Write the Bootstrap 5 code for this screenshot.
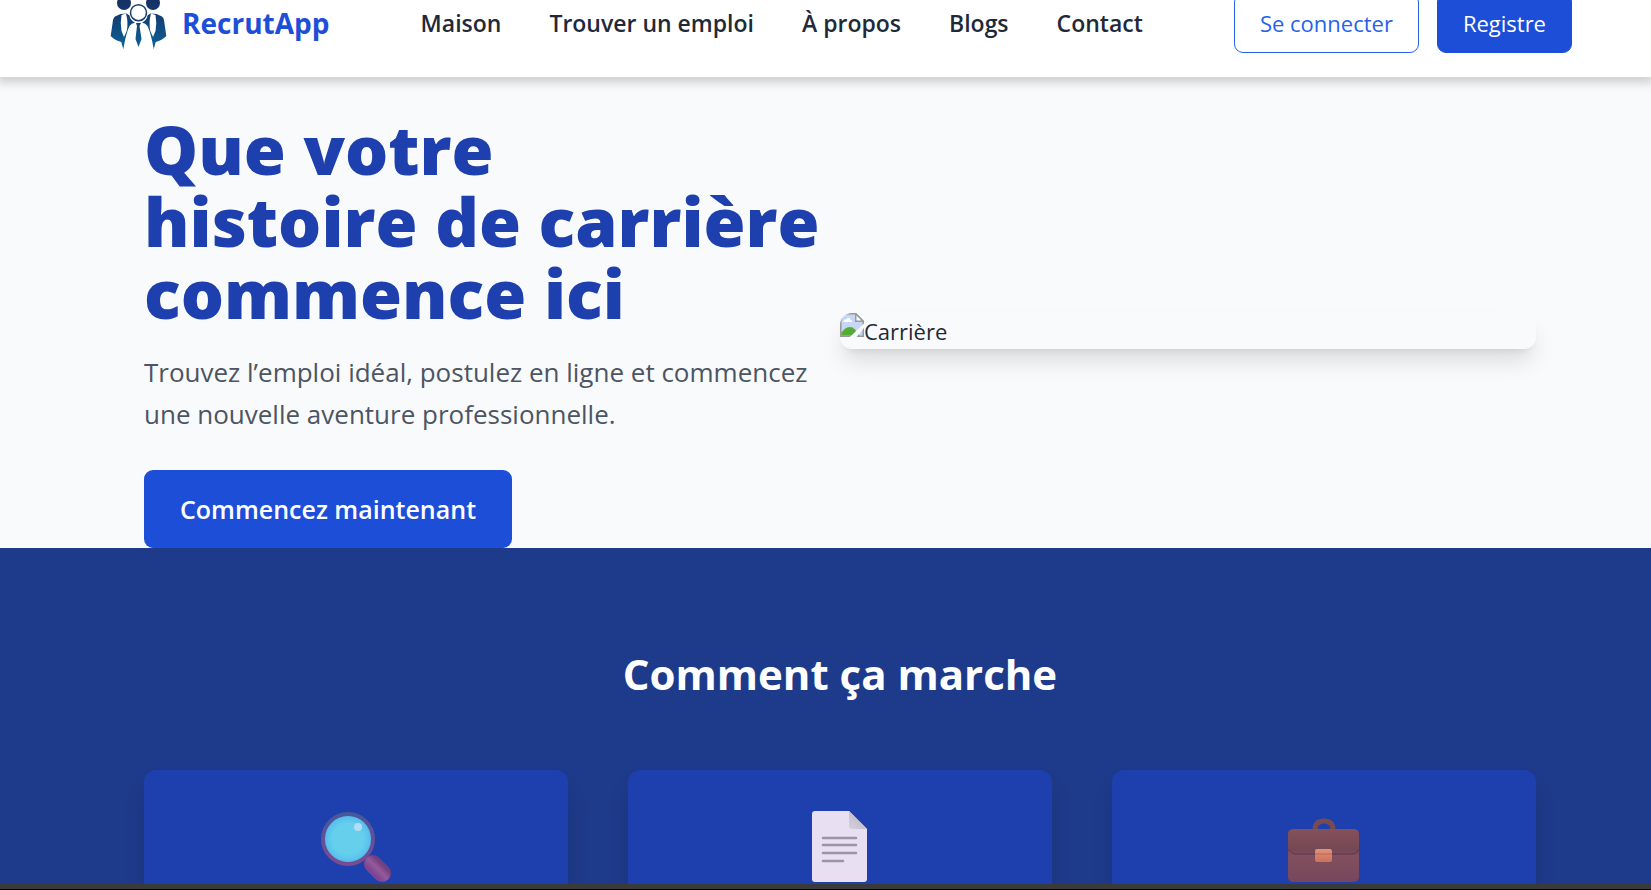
<!DOCTYPE html>
<html lang="fr">
<head>
<meta charset="utf-8">
<meta name="viewport" content="width=device-width, initial-scale=1">
<title>RecrutApp</title>
<link href="https://cdn.jsdelivr.net/npm/bootstrap@5.3.0/dist/css/bootstrap.min.css" rel="stylesheet">
<style>
body{font-family:"Open Sans","Noto Sans",sans-serif;font-size:22px;line-height:36px;color:#1f2937;background:#f9fafc;height:100vh;overflow:hidden}
.site-header{margin-top:-31px;padding:24px 79px 24px 108px;box-shadow:0 3px 9px 3px rgba(0,0,0,.17);position:relative;z-index:2}
.brand-link{color:#1d4ed8;font-size:28px;font-weight:700;gap:14px}
.main-links{gap:48px}
.main-links .nav-link{color:#1f2937;font-size:23px;font-weight:600;padding:0}
.btn-app{font-size:22px;line-height:36px;padding:11px 25px;border-radius:9px;border:1px solid #1d4ed8}
.btn-login{color:#2563eb;border-color:#2563eb;background:#fff}
.btn-solid,.btn-solid:hover{background:#1d4ed8;color:#fff}
.page-pad{padding-left:144px;padding-right:115px}
.hero{padding-top:36px}
.hero h1{font-size:68px;line-height:72px;font-weight:800;color:#1e40af;margin-bottom:22px}
.hero p{font-size:26px;line-height:42px;color:#4b5563;margin-bottom:35px}
.btn-start{font-size:25px;line-height:42px;font-weight:600;padding:18px 36px;border:0;border-radius:9px}
.hero-picture{border-radius:12px;box-shadow:0 15px 23px -4px rgba(0,0,0,.13),0 6px 9px -6px rgba(0,0,0,.12);height:36px;overflow:hidden}
.steps{background:#1e3a8a;padding-top:96px}
.steps h2{font-size:42px;line-height:60px;font-weight:700;margin-bottom:66px}
.steps .row{--bs-gutter-x:60px}
.step-card{background:#1e40af;border-radius:12px;padding-top:36px;height:280px;box-shadow:0 15px 23px -4px rgba(0,0,0,.15)}
.edge-strip{height:6px;background:#3a3a3a;border-bottom:1px solid #000}
</style>
</head>
<body>
<header class="site-header bg-white d-flex align-items-center justify-content-between">
  <a href="#" class="brand-link d-flex align-items-center text-decoration-none">
    <svg width="60" height="60" viewBox="0 0 60 60" aria-hidden="true">
      <defs><linearGradient id="suit" x1="0" y1="0" x2="0" y2="60" gradientUnits="userSpaceOnUse"><stop offset="0" stop-color="#142d63"/><stop offset=".25" stop-color="#143568"/><stop offset="1" stop-color="#0b679f"/></linearGradient>
      <g id="colleague"><circle cx="16" cy="10" r="7"/><path d="M12.500 21 7 23.500Q5.500 24.500 5 27L2.700 43Q7 47.500 13.300 49L15.300 56.300Q18 40 21.500 33 23.500 30 27 29.500 22 27 21.500 22.500L18.700 20.500Z"/><path d="M13.500 22 18 20.500Q20.500 29 18.700 38L16 44 13.500 38Q12 30 13.500 22Z" fill="#fff"/></g></defs>
      <g fill="url(#suit)">
        <use href="#colleague"/><use href="#colleague" transform="translate(61 0) scale(-1 1)"/>
        <path d="M28 30h5l-1.500 3 2 13-3 8-3-8 1.500-13Z"/>
      </g>
      <circle cx="30.500" cy="19.700" r="8" fill="#fff" stroke="#143e72" stroke-width="1.500"/>
    </svg>
    <span>RecrutApp</span>
  </a>
  <nav class="nav main-links">
    <a class="nav-link" href="#">Maison</a>
    <a class="nav-link" href="#">Trouver un emploi</a>
    <a class="nav-link" href="#">À propos</a>
    <a class="nav-link" href="#">Blogs</a>
    <a class="nav-link" href="#">Contact</a>
  </nav>
  <div class="d-flex" style="gap:18px">
    <button type="button" class="btn btn-app btn-login">Se connecter</button>
    <button type="button" class="btn btn-app btn-solid">Registre</button>
  </div>
</header>
<main>
  <section class="hero page-pad">
    <div class="row g-0 align-items-center">
      <div class="col-6">
        <h1>Que votre<br>histoire de carrière<br>commence ici</h1>
        <p class="text-nowrap">Trouvez l’emploi idéal, postulez en ligne et commencez<br>une nouvelle aventure professionnelle.</p>
        <button type="button" class="btn btn-solid btn-start d-block">Commencez maintenant</button>
      </div>
      <div class="col-6">
        <div class="hero-picture d-flex">
          <svg width="24" height="24" viewBox="0 0 16 16" aria-hidden="true">
            <path d="M.5.5h10l5 5v10H.5Z" fill="#c6d7f6" stroke="#999"/>
            <path d="M2 6q1-2 2.500-2Q6 2 7 4.500 8.500 5 8 6Z" fill="#fff"/>
            <path d="M1 15v-2q5-6 9-2l3 4Z" fill="#55ac35"/>
            <path d="M6.500 16 16 7v3l-5 6Z" fill="#f9fafc"/>
            <path d="M10.500.5v5h5Z" fill="#fff" stroke="#999"/>
          </svg>
          <span>Carrière</span>
        </div>
      </div>
    </div>
  </section>
  <section class="steps page-pad">
    <h2 class="text-center text-white">Comment ça marche</h2>
    <div class="row">
      <div class="col-4"><div class="step-card text-center">
        <svg width="80" height="80" viewBox="1 0 80 80" role="img" aria-label="Loupe">
          <defs><linearGradient id="rim" x1="0" y1="0" x2="0" y2="1"><stop offset="0" stop-color="#47589a"/><stop offset="1" stop-color="#7c4a90"/></linearGradient><radialGradient id="lens"><stop offset=".6" stop-color="#66d0ec"/><stop offset="1" stop-color="#50b9f0"/></radialGradient><linearGradient id="grip" x1="0" y1="1" x2="1" y2="0"><stop offset="0" stop-color="#7d4590"/><stop offset=".5" stop-color="#965a9b"/><stop offset="1" stop-color="#704080"/></linearGradient></defs>
          <path d="M58 58 67 67" stroke="url(#grip)" stroke-width="18" stroke-linecap="round"/>
          <circle cx="33" cy="33" r="25" fill="url(#lens)" stroke="url(#rim)" stroke-width="4"/>
          <circle cx="43" cy="21" r="4" fill="#b5dcf5"/>
        </svg></div></div>
      <div class="col-4"><div class="step-card text-center">
        <svg width="80" height="80" viewBox="0 0 80 80" role="img" aria-label="Document">
          <defs><linearGradient id="fold" x1="0" y1="1" x2="1" y2="0"><stop offset="0" stop-color="#d6d0dc"/><stop offset="1" stop-color="#b8b3c0"/></linearGradient></defs>
          <path d="M15 5h34l18 18v50q0 3-3 3H15q-3 0-3-3V8q0-3 3-3Z" fill="#e8dff2"/>
          <path d="M49 5 67 23H52q-3 0-3-3Z" fill="url(#fold)"/>
          <path d="M23 32h33M23 39h33M23 47h33M23 55h20" stroke="#9b93a7" stroke-width="2.500" stroke-linecap="round"/>
        </svg></div></div>
      <div class="col-4"><div class="step-card text-center">
        <svg width="80" height="80" viewBox="0 0 80 80" role="img" aria-label="Mallette">
          <defs><linearGradient id="hide" x1="0" y1="0" x2="0" y2="1"><stop offset="0" stop-color="#855159"/><stop offset=".4" stop-color="#734855"/><stop offset=".5" stop-color="#81505f"/><stop offset="1" stop-color="#77465b"/></linearGradient><linearGradient id="clasp" x1="0" y1="0" x2="0" y2="1"><stop offset="0" stop-color="#de9478"/><stop offset="1" stop-color="#ce7058"/></linearGradient></defs>
          <path d="M31 24q0-9 9-9t9 9" fill="none" stroke="#764b51" stroke-width="5"/>
          <rect x="4" y="23" width="71" height="53" rx="5" fill="url(#hide)"/>
          <path d="M5 43q2 5 7 5h56q5 0 7-5" fill="none" stroke="#653057" stroke-width="1"/>
          <rect x="31" y="43" width="17" height="13" rx="2" fill="url(#clasp)"/><path d="M31 48h17" stroke="#bd6658"/>
        </svg></div></div>
    </div>
  </section>
</main>
<div class="edge-strip fixed-bottom"></div>
<script src="https://cdn.jsdelivr.net/npm/bootstrap@5.3.0/dist/js/bootstrap.bundle.min.js"></script>
</body>
</html>
